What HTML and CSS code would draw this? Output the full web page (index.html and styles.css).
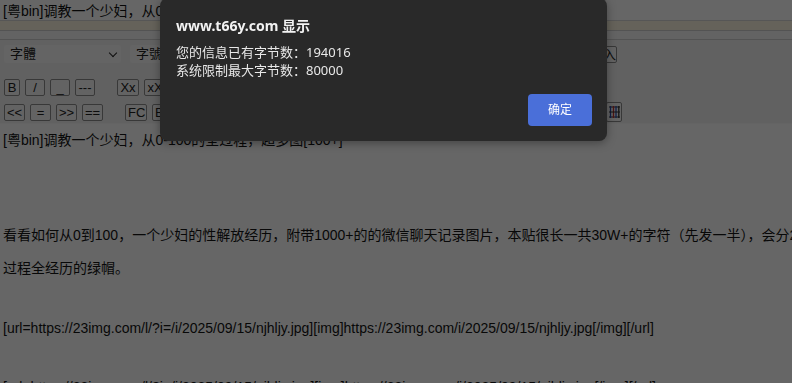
FILE: index.html
```html
<!DOCTYPE html>
<html lang="zh-CN">
<head>
    <meta charset="UTF-8">
    <title>发表帖子</title>
    <link rel="stylesheet" href="styles.css">
</head>
<body>
    <div class="subject">[粤bin]调教一个少妇，从0-100的全过程，超多图[100+]</div>
    <div class="band band-note"></div>
    <div class="band"></div>

    <div class="toolbar">
        <div class="tb-row tb-selects">
            <div class="select select-font">字體<span class="caret"></span></div>
            <div class="select select-size">字號<span class="caret"></span></div>
            <div class="btn btn-insert">入</div>
        </div>
        <div class="tb-row tb-format">
            <div class="group">
                <div class="btn btn-b">B</div>
                <div class="btn">/</div>
                <div class="btn">_</div>
                <div class="btn">---</div>
            </div>
            <div class="group">
                <div class="btn">Xx</div>
                <div class="btn">xX</div>
            </div>
        </div>
        <div class="tb-row tb-align">
            <div class="group">
                <div class="btn">&lt;&lt;</div>
                <div class="btn">=</div>
                <div class="btn">&gt;&gt;</div>
                <div class="btn">==</div>
            </div>
            <div class="group">
                <div class="btn">FC</div>
                <div class="btn">BC</div>
            </div>
            <div class="btn btn-table">
                <svg width="13" height="14" viewBox="0 0 13 14">
                    <path d="M1 2h11M1 12h11" stroke="#333" stroke-width="1"/>
                    <path d="M2.5 1v12" stroke="#2a4fb5" stroke-width="1.3"/>
                    <path d="M5.5 1v12" stroke="#c23030" stroke-width="1.3"/>
                    <path d="M8 1v12" stroke="#2a4fb5" stroke-width="1.3"/>
                    <path d="M10.8 1v12" stroke="#333" stroke-width="1.3"/>
                    <path d="M1 7h11" stroke="#333" stroke-width="1"/>
                </svg>
            </div>
        </div>
    </div>

    <div class="editor">
        <div class="ln cjk">[粤bin]调教一个少妇，从0-100的全过程，超多图[100+]</div>
        <div class="ln blank"></div>
        <div class="ln blank"></div>
        <div class="ln cjk">看看如何从0到100，一个少妇的性解放经历，附带1000+的的微信聊天记录图片，本贴很长一共30W+的字符（先发一半），会分2次发完，</div>
        <div class="ln cjk">过程全经历的绿帽。</div>
        <div class="ln gap"></div>
        <div class="ln">[url=https://23img.com/l/?i=/i/2025/09/15/njhljy.jpg][img]https://23img.com/i/2025/09/15/njhljy.jpg[/img][/url]</div>
        <div class="ln blank"></div>
        <div class="ln">[url=https://23img.com/l/?i=/i/2025/09/15/njhljz.jpg][img]https://23img.com/i/2025/09/15/njhljz.jpg[/img][/url]</div>
    </div>

    <div class="mask"></div>

    <div class="dialog">
        <div class="dialog-title">www.t66y.com 显示</div>
        <div class="dialog-msg">
            <div>您的信息已有字节数：194016</div>
            <div>系统限制最大字节数：80000</div>
        </div>
        <div class="dialog-actions">
            <div class="dialog-ok">确定</div>
        </div>
    </div>
</body>
</html>
```

FILE: styles.css
```css
body {
    margin: 0;
    padding-top: 2px;
    background-color: #fff;
    color: #222;
    font-family: 'Liberation Sans', Arial, 'Noto Sans CJK SC', sans-serif;
    overflow: hidden;
}

.subject {
    height: 18px;
    line-height: 18px;
    padding-left: 3px;
    font-size: 14px;
    color: #111;
    background-color: #fff;
    border-bottom: 1px solid #d6d6d6;
    white-space: nowrap;
}

.band {
    height: 8px;
    background-color: #f7f7f7;
    border-bottom: 1px solid #d0d0d0;
}

.band-note {
    height: 9px;
    background-color: #fcf6e2;
}

.toolbar {
    background-color: #f2f2f2;
    padding: 3px 0 0 4px;
    height: 80px;
    border-bottom: 1px solid #fafafa;
}

.tb-row {
    display: flex;
    align-items: center;
}

.tb-selects {
    width: 613px;
    height: 22px;
}

.select {
    position: relative;
    height: 18px;
    line-height: 18px;
    box-sizing: border-box;
    padding-left: 6px;
    font-size: 13px;
    background-color: #fafafa;
    border-radius: 2px;
    color: #222;
}

.select-font {
    width: 117px;
    margin-right: 9px;
}

.select-size {
    width: 100px;
}

.caret {
    position: absolute;
    right: 5px;
    top: 5px;
    width: 5px;
    height: 5px;
    border-right: 1.5px solid #222;
    border-bottom: 1.5px solid #222;
    transform: rotate(45deg);
}

.btn-insert {
    margin-left: auto;
    height: 21px;
    width: 17px;
}

.tb-format {
    margin-top: 14px;
}

.tb-align {
    margin-top: 6px;
    width: 618px;
}

.group {
    display: flex;
    gap: 5px;
    margin-right: 22px;
}

.btn {
    box-sizing: border-box;
    min-width: 16px;
    height: 17px;
    padding: 0 2px;
    border: 1px solid #8c8c8c;
    border-radius: 2px;
    background-color: #f7f7f7;
    font-size: 13px;
    line-height: 15px;
    text-align: center;
    color: #222;
}

.tb-format .btn {
    width: 20px;
}

.tb-format .btn-b {
    width: 16px;
}

.tb-align .btn {
    width: 21px;
}

.tb-format .group + .group .btn,
.tb-align .group + .group .btn {
    width: 22px;
}

.btn-table {
    margin-left: auto;
    height: 20px;
    width: 16px !important;
    padding: 2px 0 0;
}

.editor {
    padding: 0 0 0 3px;
    font-size: 14px;
    color: #141414;
    white-space: nowrap;
}

.ln {
    height: 28.5px;
    line-height: 28.5px;
}

.ln.cjk {
    height: 33px;
    line-height: 33px;
}

.ln.blank {
    height: 31px;
}

.mask {
    position: fixed;
    top: 0;
    left: 0;
    right: 0;
    bottom: 0;
    background-color: rgba(0, 0, 0, 0.6);
}

.dialog {
    position: fixed;
    top: -2px;
    left: 160px;
    width: 447px;
    height: 143px;
    box-sizing: border-box;
    padding: 18px 15px 15px 16px;
    display: flex;
    flex-direction: column;
    background-color: #292929;
    border-radius: 8px;
    box-shadow: 0 2px 10px rgba(0, 0, 0, 0.35);
    color: #e8e8e8;
    font-family: 'Noto Sans', 'Noto Sans CJK SC', sans-serif;
}

.dialog-title {
    font-size: 14px;
    font-weight: bold;
    line-height: 20px;
    color: #f2f2f2;
}

.dialog-msg {
    margin-top: 7px;
    font-size: 13px;
    line-height: 18px;
}

.dialog-actions {
    margin-top: auto;
    display: flex;
    justify-content: flex-end;
}

.dialog-ok {
    width: 64px;
    height: 32px;
    line-height: 32px;
    text-align: center;
    font-size: 12px;
    color: #fff;
    background-color: #4a6fd9;
    border-radius: 4px;
}
```
